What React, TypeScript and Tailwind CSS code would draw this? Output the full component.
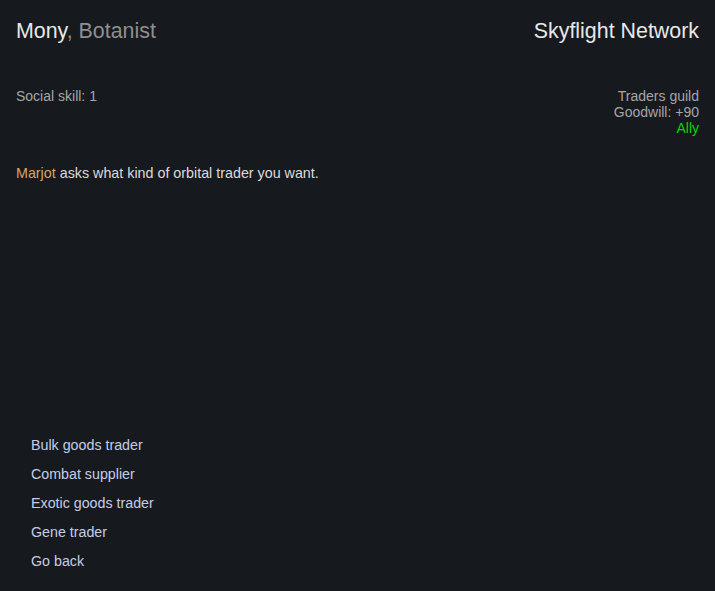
export default function App() {
  const options = [
    "Bulk goods trader",
    "Combat supplier",
    "Exotic goods trader",
    "Gene trader",
    "Go back",
  ];

  return (
    <div
      className="h-screen bg-[#16191e] flex flex-col p-4 pb-[15px] text-sm"
      style={{ fontFamily: '"Liberation Sans", Arial, sans-serif' }}
    >
      <div className="flex justify-between items-center h-[30px] text-[21.4px]">
        <div className="text-[#e8e8e8]">
          Mony<span className="text-[#8f8f8f]">, Botanist</span>
        </div>
        <div className="text-[#e8e8e8]">Skyflight Network</div>
      </div>

      <div className="flex justify-between mt-[42px] leading-4">
        <div className="text-[#a6a6a6]">Social skill: 1</div>
        <div className="flex flex-col items-end text-[#a6a6a6]">
          <span>Traders guild</span>
          <span>Goodwill: +90</span>
          <span className="text-[#00d800]">Ally</span>
        </div>
      </div>

      <p className="mt-[29px] leading-4 text-[14.3px] text-[#dcdcdc]">
        <span className="text-[#d9a366]">Marjot</span> asks what kind of orbital
        trader you want.
      </p>

      <ul className="mt-auto pl-[15px] text-[14.25px]">
        {options.map((o) => (
          <li key={o} className="h-[29px] flex items-center text-[#c5cde6] cursor-pointer hover:text-white">
            {o}
          </li>
        ))}
      </ul>
    </div>
  );
}
